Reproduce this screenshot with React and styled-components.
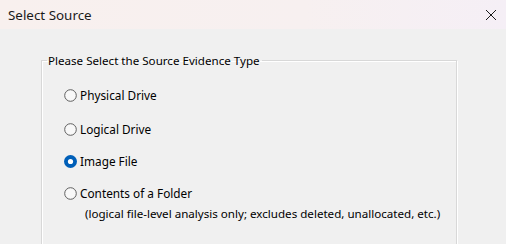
import React from "react";
import styled, { createGlobalStyle } from "styled-components";

const Global = createGlobalStyle`
  html, body { margin: 0; padding: 0; background: #f0f0f0; }
  body { font-family: "Noto Sans", "Open Sans", sans-serif; overflow: hidden; }
`;

const Window = styled.div`
  width: 506px;
  height: 244px;
  background: #f0f0f0;
  display: flex;
  flex-direction: column;
  overflow: hidden;
`;

const TitleBar = styled.div`
  height: 29px;
  flex: none;
  display: flex;
  align-items: center;
  justify-content: space-between;
  padding: 0 9px 0 8px;
  background: linear-gradient(90deg, #f8f0ee 0%, #f7f0f0 60%, #f5eff6 100%);
`;

const Title = styled.span`
  font-family: "Noto Sans", sans-serif;
  font-size: 13.4px;
  color: #1a1a1a;
`;

const Close = styled.svg`
  width: 12px;
  height: 12px;
  margin-top: 1px;
`;

const Body = styled.div`
  flex: 1;
  padding: 24px 49px 0 41px;
`;

const Group = styled.fieldset`
  margin: 0;
  padding: 3px 0 40px 0;
  border: 1px solid #d8d8d8;
  box-shadow: inset 1px 1px 0 #ffffff, 1px 1px 0 #ffffff;
  display: flex;
  flex-direction: column;
`;

const Legend = styled.legend`
  padding: 0 2px 0 1px;
  margin-left: 5px;
  font-size: 11.6px;
  color: #000;
`;

const Option = styled.label`
  display: flex;
  flex-direction: column;
  padding-left: 22px;
  margin-top: ${(p) => p.$gap}px;
`;

const Row = styled.span`
  display: flex;
  align-items: center;
  gap: 3px;
  font-size: 11.8px;
  color: #000;
  line-height: 16px;
`;

const Note = styled.span`
  font-size: 11.6px;
  line-height: 16px;
  padding-left: 21px;
  margin-top: 5px;
  color: #000;
  white-space: nowrap;
`;

const Radio = ({ on }) => (
  <svg width="13" height="13" viewBox="0 0 13 13">
    {on ? (
      <>
        <circle cx="6.5" cy="6.5" r="6.5" fill="#005fb8" />
        <circle cx="6.5" cy="6.5" r="2.6" fill="#ffffff" />
      </>
    ) : (
      <circle cx="6.5" cy="6.5" r="5.8" fill="#f8f8f8" stroke="#5f5f5f" strokeWidth="1" />
    )}
  </svg>
);

const options = [
  { label: "Physical Drive", gap: 16 },
  { label: "Logical Drive", gap: 18 },
  { label: "Image File", gap: 16, on: true },
  { label: "Contents of a Folder", gap: 16, note: "(logical file-level analysis only; excludes deleted, unallocated, etc.)" },
];

export default function App() {
  return (
    <Window>
      <Global />
      <TitleBar>
        <Title>Select Source</Title>
        <Close viewBox="0 0 12 12">
          <path d="M1 1 L11 11 M11 1 L1 11" stroke="#1a1a1a" strokeWidth="1" />
        </Close>
      </TitleBar>
      <Body>
        <Group>
          <Legend>Please Select the Source Evidence Type</Legend>
          {options.map((o) => (
            <Option key={o.label} $gap={o.gap}>
              <Row>
                <Radio on={o.on} />
                {o.label}
              </Row>
              {o.note && <Note>{o.note}</Note>}
            </Option>
          ))}
        </Group>
      </Body>
    </Window>
  );
}
